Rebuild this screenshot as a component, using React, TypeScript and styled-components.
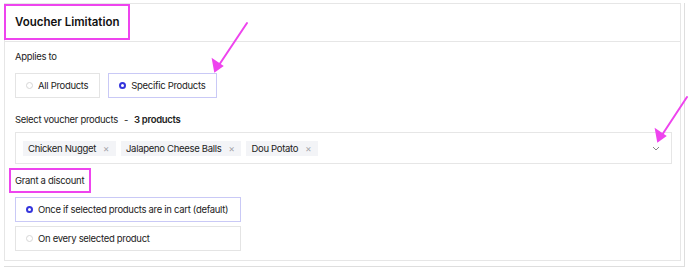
import React from 'react';
import styled, { createGlobalStyle } from 'styled-components';

const GlobalStyle = createGlobalStyle`
    html, body {
        margin: 0;
        padding: 0;
        background: #ffffff;
    }
    body {
        font-family: Inter, "Noto Sans", sans-serif;
        color: #1f2024;
        -webkit-font-smoothing: antialiased;
    }
`;

const MAGENTA = '#ee44ee';

const Page = styled.div`
    position: relative;
    width: 688px;
    height: 267px;
    padding: 3px 0 0 4px;
    box-sizing: border-box;
`;

const Frame = styled.div`
    width: 681px;
    padding: 0 3px 5px 0;
    box-sizing: border-box;
    border-right: 1px solid #dedede;
    border-bottom: 1px solid #dedede;
`;

const Card = styled.div`
    width: 677px;
    height: 258px;
    box-sizing: border-box;
    border: 1px solid #e6e6e6;
    display: flex;
    flex-direction: column;
`;

const Header = styled.div`
    height: 38px;
    border-bottom: 1px solid #e6e6e6;
    box-sizing: border-box;
    display: flex;
    align-items: flex-start;
`;

const TitleBox = styled.div`
    margin: 0 0 0 -1px;
    height: 36px;
    padding: 0 9px;
    box-sizing: border-box;
    border: 2px solid ${MAGENTA};
    display: flex;
    align-items: center;
    white-space: nowrap;
    font-size: 11.5px;
    font-weight: 600;
    color: #111;
`;

const Body = styled.div`
    padding: 0 8px 0 10px;
    display: flex;
    flex-direction: column;
    font-size: 9.5px;
    letter-spacing: -0.3px;
    white-space: nowrap;
`;

const Label = styled.div<{ $top: number }>`
    margin-top: ${p => p.$top}px;
    line-height: 14px;
    color: #222;
    display: flex;
    gap: 6px;
    b { font-weight: 600; }
`;

const HighlightLabel = styled.div`
    margin: 4px 0 0 -6px;
    align-self: flex-start;
    height: 25px;
    padding: 0 5px 0 4px;
    box-sizing: border-box;
    border: 2px solid ${MAGENTA};
    display: flex;
    align-items: center;
    color: #222;
`;

const OptionRow = styled.div`
    margin-top: 9px;
    display: flex;
    gap: 8px;
`;

const OptionColumn = styled.div`
    margin-top: 4px;
    display: flex;
    flex-direction: column;
    gap: 4px;
    width: 226px;
`;

const Option = styled.div<{ $selected?: boolean }>`
    height: 25px;
    box-sizing: border-box;
    padding: 0 11px 0 10px;
    display: flex;
    align-items: center;
    gap: 5px;
    border: 1px solid ${p => (p.$selected ? '#c9c9f6' : '#e4e4e4')};
    color: #222;
`;

const Radio = styled.span<{ $selected?: boolean }>`
    width: 7px;
    height: 7px;
    border-radius: 50%;
    box-sizing: border-box;
    flex: none;
    border: ${p => (p.$selected ? '2px solid #3535dc' : '1px solid #d6d6d6')};
    background: #ffffff;
`;

const Select = styled.div`
    margin-top: 5px;
    height: 32px;
    box-sizing: border-box;
    border: 1px solid #e6e6e6;
    padding: 0 11px 0 7px;
    display: flex;
    align-items: center;
    gap: 5px;
`;

const Chip = styled.span`
    height: 15px;
    padding: 0 7px 0 5px;
    background: #f3f4f7;
    display: inline-flex;
    align-items: center;
    gap: 7px;
    color: #222;
`;

const ChipClose = styled.span`
    color: #a3a3a8;
`;

const Chevron = styled.svg`
    margin-left: auto;
`;

const Annotation = styled.svg`
    position: absolute;
    left: 0;
    top: 0;
    pointer-events: none;
`;

const products = ['Chicken Nugget', 'Jalapeno Cheese Balls', 'Dou Potato'];

const App: React.FC = () => (
    <Page>
        <GlobalStyle />
        <Frame>
            <Card>
                <Header>
                    <TitleBox>Voucher Limitation</TitleBox>
                </Header>
                <Body>
                    <Label $top={8}>Applies to</Label>
                    <OptionRow>
                        <Option>
                            <Radio />
                            All Products
                        </Option>
                        <Option $selected>
                            <Radio $selected />
                            Specific Products
                        </Option>
                    </OptionRow>
                    <Label $top={15}>
                        Select voucher products <span>-</span> <b>3 products</b>
                    </Label>
                    <Select>
                        {products.map(name => (
                            <Chip key={name}>
                                {name}
                                <ChipClose>×</ChipClose>
                            </Chip>
                        ))}
                        <Chevron width="8" height="5" viewBox="0 0 8 5">
                            <path d="M1 1l3 3 3-3" fill="none" stroke="#888" strokeWidth="1" />
                        </Chevron>
                    </Select>
                    <HighlightLabel>Grant a discount</HighlightLabel>
                    <OptionColumn>
                        <Option $selected>
                            <Radio $selected />
                            Once if selected products are in cart (default)
                        </Option>
                        <Option>
                            <Radio />
                            On every selected product
                        </Option>
                    </OptionColumn>
                </Body>
            </Card>
        </Frame>
        <Annotation width="688" height="267" viewBox="0 0 688 267">
            <g stroke={MAGENTA} strokeWidth="2" fill={MAGENTA} strokeLinecap="round">
                <line x1="247" y1="23" x2="219" y2="65" />
                <polygon points="215,71 213,60 222,66" />
                <line x1="687" y1="97" x2="662" y2="135" />
                <polygon points="658,141 656,130 665,136" />
            </g>
        </Annotation>
    </Page>
);

export default App;
